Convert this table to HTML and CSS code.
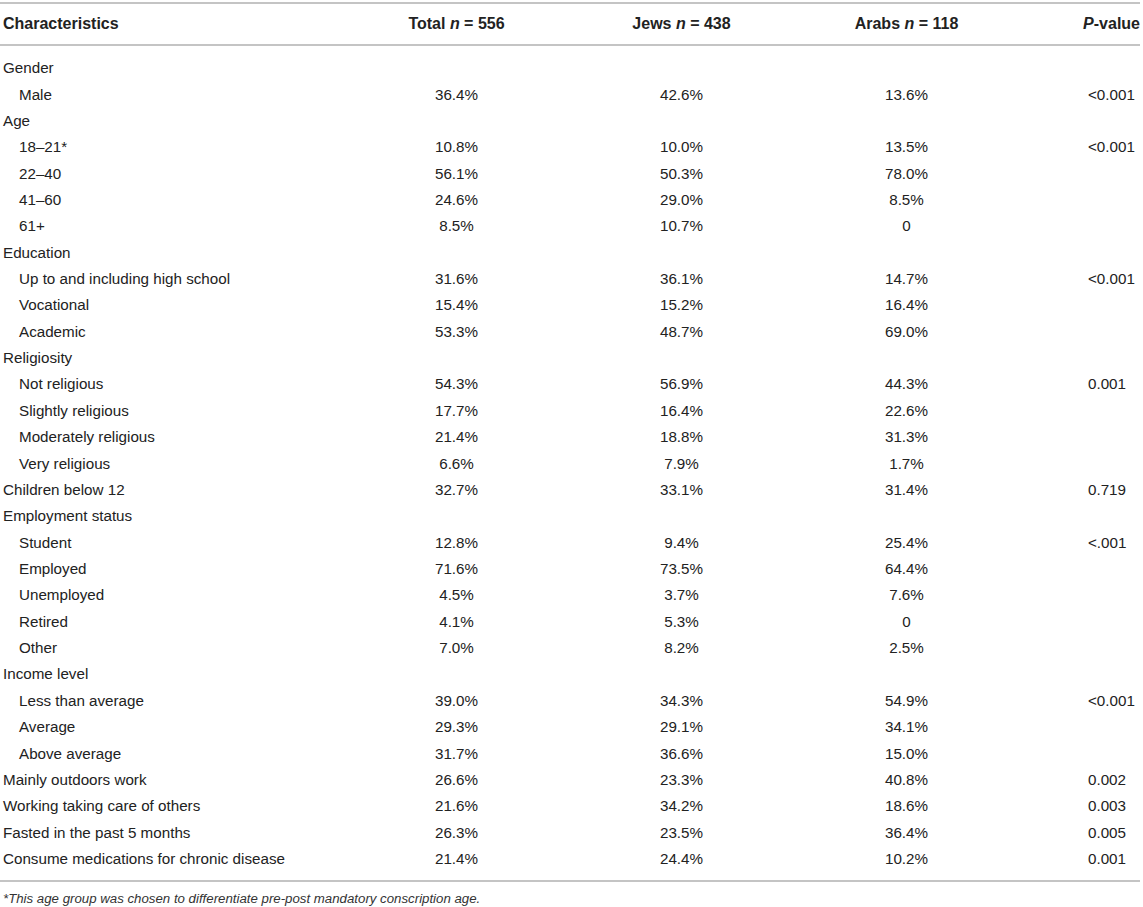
FILE: index.html
```html
<!DOCTYPE html>
<html>
    <head>
        <meta charset="utf-8" />
        <title>Characteristics of the sample</title>
        <link rel="stylesheet" href="styles.css">
    </head>
    <body>
        <div class="page">
            <table class="stats">
                <colgroup>
                    <col class="c_label">
                    <col class="c_num">
                    <col class="c_num">
                    <col class="c_num">
                    <col class="c_p">
                </colgroup>
                <thead>
                    <tr>
                        <th class="lbl">Characteristics</th>
                        <th>Total <i>n</i> = 556</th>
                        <th>Jews <i>n</i> = 438</th>
                        <th>Arabs <i>n</i> = 118</th>
                        <th class="pv"><i>P</i>-value</th>
                    </tr>
                </thead>
                <tbody>
                    <tr><td class="lbl">Gender</td><td></td><td></td><td></td><td></td></tr>
                    <tr><td class="lbl sub">Male</td><td>36.4%</td><td>42.6%</td><td>13.6%</td><td class="pv">&lt;0.001</td></tr>
                    <tr><td class="lbl">Age</td><td></td><td></td><td></td><td></td></tr>
                    <tr><td class="lbl sub">18–21*</td><td>10.8%</td><td>10.0%</td><td>13.5%</td><td class="pv">&lt;0.001</td></tr>
                    <tr><td class="lbl sub">22–40</td><td>56.1%</td><td>50.3%</td><td>78.0%</td><td class="pv"></td></tr>
                    <tr><td class="lbl sub">41–60</td><td>24.6%</td><td>29.0%</td><td>8.5%</td><td class="pv"></td></tr>
                    <tr><td class="lbl sub">61+</td><td>8.5%</td><td>10.7%</td><td>0</td><td class="pv"></td></tr>
                    <tr><td class="lbl">Education</td><td></td><td></td><td></td><td></td></tr>
                    <tr><td class="lbl sub">Up to and including high school</td><td>31.6%</td><td>36.1%</td><td>14.7%</td><td class="pv">&lt;0.001</td></tr>
                    <tr><td class="lbl sub">Vocational</td><td>15.4%</td><td>15.2%</td><td>16.4%</td><td class="pv"></td></tr>
                    <tr><td class="lbl sub">Academic</td><td>53.3%</td><td>48.7%</td><td>69.0%</td><td class="pv"></td></tr>
                    <tr><td class="lbl">Religiosity</td><td></td><td></td><td></td><td></td></tr>
                    <tr><td class="lbl sub">Not religious</td><td>54.3%</td><td>56.9%</td><td>44.3%</td><td class="pv">0.001</td></tr>
                    <tr><td class="lbl sub">Slightly religious</td><td>17.7%</td><td>16.4%</td><td>22.6%</td><td class="pv"></td></tr>
                    <tr><td class="lbl sub">Moderately religious</td><td>21.4%</td><td>18.8%</td><td>31.3%</td><td class="pv"></td></tr>
                    <tr><td class="lbl sub">Very religious</td><td>6.6%</td><td>7.9%</td><td>1.7%</td><td class="pv"></td></tr>
                    <tr><td class="lbl">Children below 12</td><td>32.7%</td><td>33.1%</td><td>31.4%</td><td class="pv">0.719</td></tr>
                    <tr><td class="lbl">Employment status</td><td></td><td></td><td></td><td></td></tr>
                    <tr><td class="lbl sub">Student</td><td>12.8%</td><td>9.4%</td><td>25.4%</td><td class="pv">&lt;.001</td></tr>
                    <tr><td class="lbl sub">Employed</td><td>71.6%</td><td>73.5%</td><td>64.4%</td><td class="pv"></td></tr>
                    <tr><td class="lbl sub">Unemployed</td><td>4.5%</td><td>3.7%</td><td>7.6%</td><td class="pv"></td></tr>
                    <tr><td class="lbl sub">Retired</td><td>4.1%</td><td>5.3%</td><td>0</td><td class="pv"></td></tr>
                    <tr><td class="lbl sub">Other</td><td>7.0%</td><td>8.2%</td><td>2.5%</td><td class="pv"></td></tr>
                    <tr><td class="lbl">Income level</td><td></td><td></td><td></td><td></td></tr>
                    <tr><td class="lbl sub">Less than average</td><td>39.0%</td><td>34.3%</td><td>54.9%</td><td class="pv">&lt;0.001</td></tr>
                    <tr><td class="lbl sub">Average</td><td>29.3%</td><td>29.1%</td><td>34.1%</td><td class="pv"></td></tr>
                    <tr><td class="lbl sub">Above average</td><td>31.7%</td><td>36.6%</td><td>15.0%</td><td class="pv"></td></tr>
                    <tr><td class="lbl">Mainly outdoors work</td><td>26.6%</td><td>23.3%</td><td>40.8%</td><td class="pv">0.002</td></tr>
                    <tr><td class="lbl">Working taking care of others</td><td>21.6%</td><td>34.2%</td><td>18.6%</td><td class="pv">0.003</td></tr>
                    <tr><td class="lbl">Fasted in the past 5 months</td><td>26.3%</td><td>23.5%</td><td>36.4%</td><td class="pv">0.005</td></tr>
                    <tr><td class="lbl">Consume medications for chronic disease</td><td>21.4%</td><td>24.4%</td><td>10.2%</td><td class="pv">0.001</td></tr>
                </tbody>
            </table>
            <p class="note">*This age group was chosen to differentiate pre-post mandatory conscription age.</p>
        </div>
    </body>
</html>
```

FILE: styles.css
```css
body{
    margin:0;
    background:#fff;
    color:#222;
    font-family:"Liberation Sans", Arial, sans-serif;
}
.page{
    width:1140px;
    padding-top:2px;
}
.stats{
    width:1140px;
    border-collapse:collapse;
    table-layout:fixed;
    font-size:15.2px;
}
.c_label{
    width:344px;
}
.c_num{
    width:225px;
}
.c_p{
    width:121px;
}
/*表头 上下两条灰线*/
.stats thead th{
    height:40px;
    padding:0;
    font-size:16px;
    font-weight:bold;
    text-align:center;
    border-top:2px solid #c4c4c4;
    border-bottom:2px solid #c4c4c4;
}
.stats th.lbl{
    text-align:left;
    padding-left:3px;
}
.stats th.pv{
    text-align:right;
    padding-right:0;
}
.stats tbody td{
    height:26.37px;
    padding:0;
    text-align:center;
    line-height:18px;
}
.stats tbody tr:first-child td{
    padding-top:9px;
}
.stats tbody tr:last-child td{
    padding-bottom:8px;
    border-bottom:2px solid #c4c4c4;
}
.stats td.lbl{
    text-align:left;
    padding-left:3px;
}
.stats td.sub{
    padding-left:19px;
}
.stats td.pv{
    text-align:left;
    padding-left:69px;
}
.note{
    margin:9px 0 0 3px;
    font-size:13.25px;
    font-style:italic;
    color:#333;
}
```
